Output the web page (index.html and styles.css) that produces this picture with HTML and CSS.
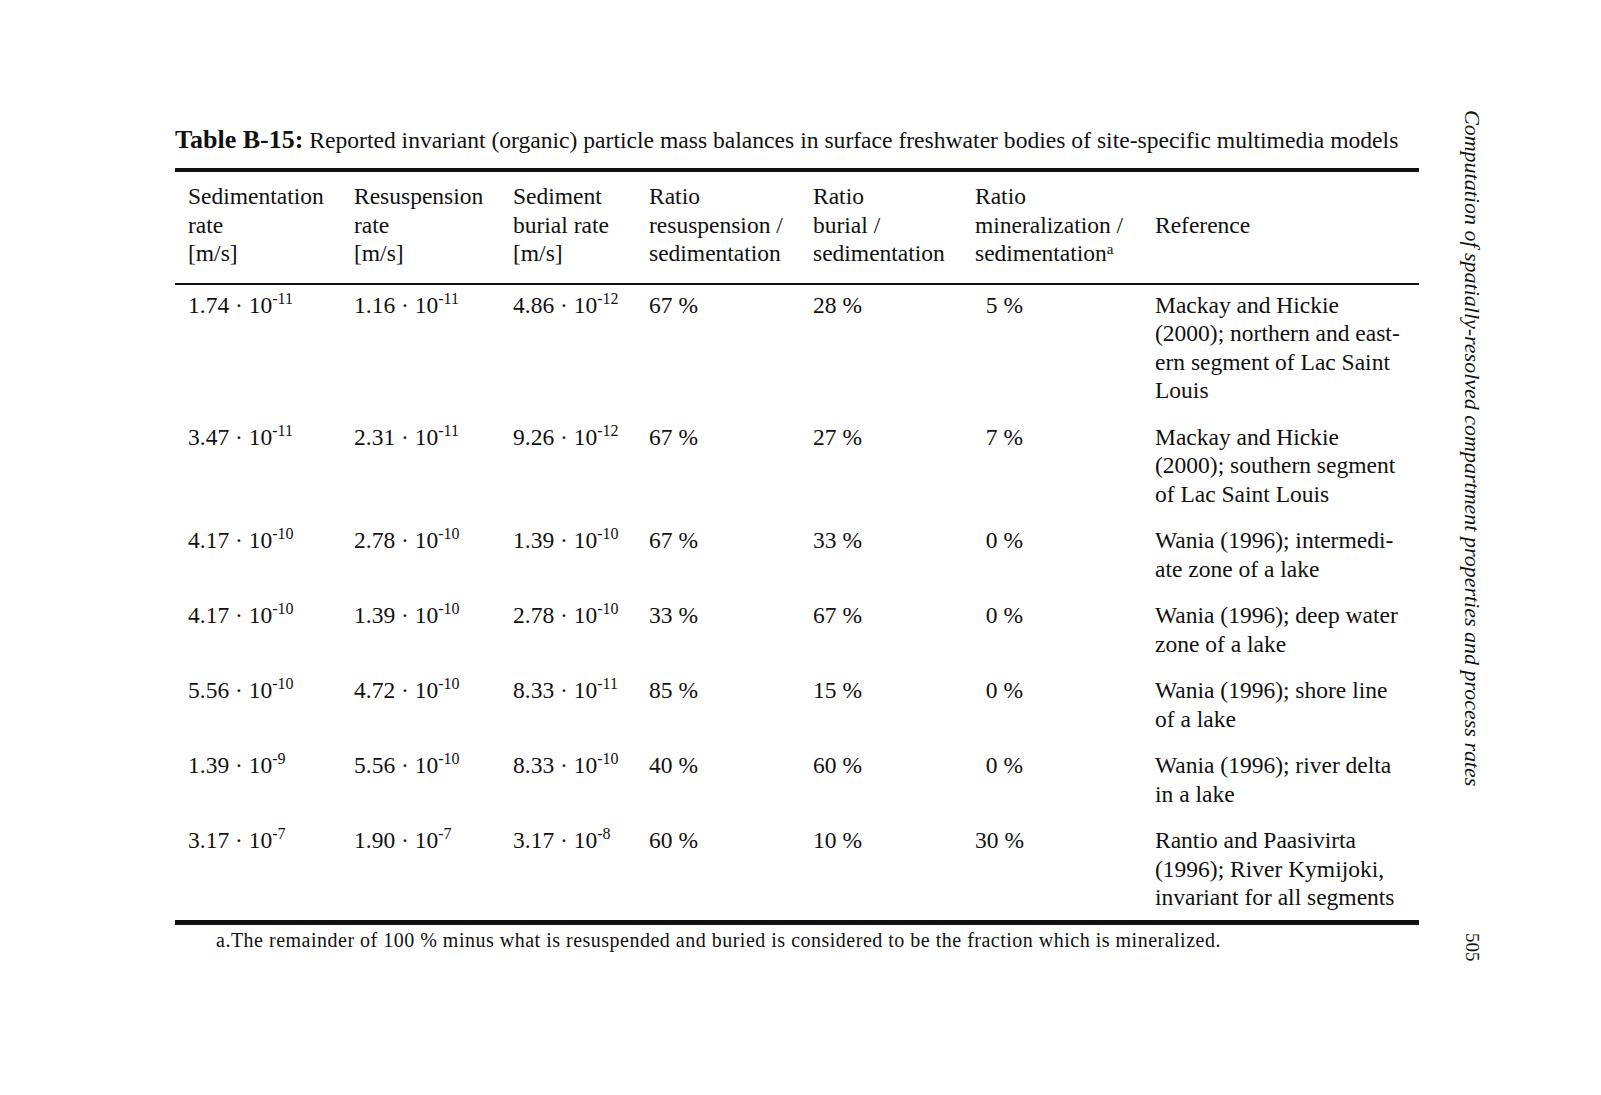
FILE: index.html
```html
<!DOCTYPE html>
<html>
<head>
<meta charset="utf-8">
<link rel="stylesheet" href="styles.css">
</head>
<body>
<div class="page">
  <div class="main">
    <div class="title"><b>Table B-15:</b> Reported invariant (organic) particle mass balances in surface freshwater bodies of site-specific multimedia models</div>
    <table class="tbl">
      <colgroup>
        <col class="c1"><col class="c2"><col class="c3"><col class="c4"><col class="c5"><col class="c6"><col class="c7">
      </colgroup>
      <thead>
        <tr>
          <th class="first">Sedimentation<br>rate<br>[m/s]</th>
          <th>Resuspension<br>rate<br>[m/s]</th>
          <th>Sediment<br>burial rate<br>[m/s]</th>
          <th>Ratio<br>resuspension /<br>sedimentation</th>
          <th>Ratio<br>burial /<br>sedimentation</th>
          <th>Ratio<br>mineralization /<br>sedimentation<sup class="fn">a</sup></th>
          <th>Reference</th>
        </tr>
      </thead>
      <tbody>
        <tr>
          <td class="first">1.74 · 10<sup>-11</sup></td>
          <td>1.16 · 10<sup>-11</sup></td>
          <td>4.86 · 10<sup>-12</sup></td>
          <td>67 %</td>
          <td>28 %</td>
          <td class="r">5 %</td>
          <td class="ref">Mackay and Hickie<br>(2000); northern and east-<br>ern segment of Lac Saint<br>Louis</td>
        </tr>
        <tr>
          <td class="first">3.47 · 10<sup>-11</sup></td>
          <td>2.31 · 10<sup>-11</sup></td>
          <td>9.26 · 10<sup>-12</sup></td>
          <td>67 %</td>
          <td>27 %</td>
          <td class="r">7 %</td>
          <td class="ref">Mackay and Hickie<br>(2000); southern segment<br>of Lac Saint Louis</td>
        </tr>
        <tr>
          <td class="first">4.17 · 10<sup>-10</sup></td>
          <td>2.78 · 10<sup>-10</sup></td>
          <td>1.39 · 10<sup>-10</sup></td>
          <td>67 %</td>
          <td>33 %</td>
          <td class="r">0 %</td>
          <td class="ref">Wania (1996); intermedi-<br>ate zone of a lake</td>
        </tr>
        <tr>
          <td class="first">4.17 · 10<sup>-10</sup></td>
          <td>1.39 · 10<sup>-10</sup></td>
          <td>2.78 · 10<sup>-10</sup></td>
          <td>33 %</td>
          <td>67 %</td>
          <td class="r">0 %</td>
          <td class="ref">Wania (1996); deep water<br>zone of a lake</td>
        </tr>
        <tr>
          <td class="first">5.56 · 10<sup>-10</sup></td>
          <td>4.72 · 10<sup>-10</sup></td>
          <td>8.33 · 10<sup>-11</sup></td>
          <td>85 %</td>
          <td>15 %</td>
          <td class="r">0 %</td>
          <td class="ref">Wania (1996); shore line<br>of a lake</td>
        </tr>
        <tr>
          <td class="first">1.39 · 10<sup>-9</sup></td>
          <td>5.56 · 10<sup>-10</sup></td>
          <td>8.33 · 10<sup>-10</sup></td>
          <td>40 %</td>
          <td>60 %</td>
          <td class="r">0 %</td>
          <td class="ref">Wania (1996); river delta<br>in a lake</td>
        </tr>
        <tr class="last">
          <td class="first">3.17 · 10<sup>-7</sup></td>
          <td>1.90 · 10<sup>-7</sup></td>
          <td>3.17 · 10<sup>-8</sup></td>
          <td>60 %</td>
          <td>10 %</td>
          <td class="r">30 %</td>
          <td class="ref">Rantio and Paasivirta<br>(1996); River Kymijoki,<br>invariant for all segments</td>
        </tr>
      </tbody>
    </table>
    <div class="footnote">a.The remainder of 100 % minus what is resuspended and buried is considered to be the fraction which is mineralized.</div>
  </div>
  <div class="side">
    <div class="running">Computation of spatially-resolved compartment properties and process rates</div>
    <div class="pageno">505</div>
  </div>
</div>
</body>
</html>
```

FILE: styles.css
```css
html, body {
  margin: 0;
  padding: 0;
  background: #ffffff;
}

body {
  font-family: "Liberation Serif", "Times New Roman", serif;
  color: #111111;
}

.page {
  display: flex;
  padding-left: 175px;
}

.main {
  width: 1244px;
  padding-top: 126px;
}

.title {
  font-size: 23.6px;
  line-height: 28px;
  white-space: nowrap;
}

.title b {
  font-weight: bold;
  font-size: 26px;
}

.tbl {
  margin-top: 14px;
  width: 1244px;
  table-layout: fixed;
  border-collapse: separate;
  border-spacing: 0;
  border-top: 4px solid #111;
  border-bottom: 5px solid #111;
  font-size: 23.5px;
  line-height: 28.5px;
}

.c1 { width: 179px; }
.c2 { width: 159px; }
.c3 { width: 136px; }
.c4 { width: 164px; }
.c5 { width: 162px; }
.c6 { width: 180px; }
.c7 { width: 264px; }

.tbl th {
  font-weight: normal;
  text-align: left;
  vertical-align: middle;
  padding: 10px 0 15px 0;
  border-bottom: 2px solid #111;
  white-space: nowrap;
}

.tbl td {
  text-align: left;
  vertical-align: top;
  padding: 6px 0 12px 0;
  white-space: nowrap;
}

.tbl .last td {
  padding-bottom: 8px;
}

.tbl .first {
  padding-left: 13px;
}

.tbl td.r {
  text-align: right;
  padding-right: 132px;
}

sup {
  font-size: 16px;
  line-height: 0;
  vertical-align: 9px;
}

sup.fn {
  font-size: 15px;
  vertical-align: 7px;
}

.footnote {
  padding-left: 41px;
  margin-top: 4px;
  font-size: 20px;
  letter-spacing: 0.5px;
  line-height: 22px;
  white-space: nowrap;
}

.side {
  display: flex;
  flex-direction: column;
  align-items: center;
  margin-left: 40px;
  padding-top: 110px;
  height: 851px;
  box-sizing: content-box;
}

.running {
  writing-mode: vertical-rl;
  font-style: italic;
  font-size: 22px;
  line-height: 26px;
  white-space: nowrap;
}

.pageno {
  writing-mode: vertical-rl;
  margin-top: auto;
  font-size: 19px;
  line-height: 24px;
}
```
